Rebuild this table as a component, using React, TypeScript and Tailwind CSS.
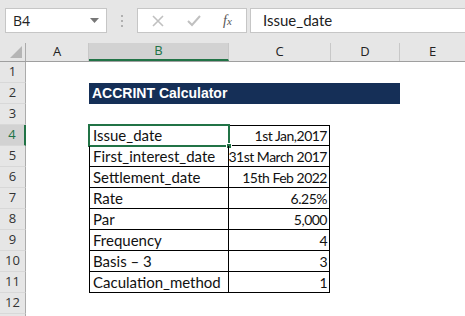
import React from "react";

// workbook sheet with the ACCRINT inputs table

type Row = { label: string; value: string };

const rows: Row[] = [
  { label: "Issue_date", value: "1st Jan,2017" },
  { label: "First_interest_date", value: "31st March 2017" },
  { label: "Settlement_date", value: "15th Feb 2022" },
  { label: "Rate", value: "6.25%" },
  { label: "Par", value: "5,000" },
  { label: "Frequency", value: "4" },
  { label: "Basis – 3", value: "3" },
  { label: "Caculation_method", value: "1" },
];

const columns = [
  { name: "A", width: "w-[63px]" },
  { name: "B", width: "w-[140px]" },
  { name: "C", width: "w-[102px]" },
  { name: "D", width: "w-[69px]" },
  { name: "E", width: "w-[66px]" },
];

const cellFont = { fontFamily: "Lato, 'Liberation Sans', sans-serif" };

const RowHeader = ({ n, active = false }: { n?: number; active?: boolean }) => (
  <div
    className={`w-[26px] shrink-0 h-full flex items-center justify-center text-[13px] border-b border-[#d8d8d8] ${
      active
        ? "bg-[#d2d2d2] border-r-2 border-r-[#217346] text-[#217346]"
        : "bg-[#e6e6e6] border-r border-r-[#ababab] text-[#333]"
    }`}
    style={{ fontFamily: "'Open Sans', sans-serif" }}
  >
    {n}
  </div>
);

const FormulaBar = () => (
  <div className="h-[43px] bg-[#e6e6e6] flex items-start pt-[8px] pl-[5px]">
    <div className="w-[102px] h-[25px] bg-white border border-[#c6c6c6] flex items-center justify-between pl-[7px] pr-[7px]">
      <span className="text-[14px] text-[#222]" style={{ fontFamily: "'Open Sans', sans-serif" }}>
        B4
      </span>
      <svg width="9" height="5" viewBox="0 0 9 5">
        <path d="M0 0h9L4.5 5z" fill="#777" />
      </svg>
    </div>
    <div className="w-[30px] h-[25px] flex flex-col items-center justify-center gap-[3px]">
      <span className="w-[2px] h-[2px] bg-[#b0b0b0]" />
      <span className="w-[2px] h-[2px] bg-[#b0b0b0]" />
      <span className="w-[2px] h-[2px] bg-[#b0b0b0]" />
    </div>
    <div className="w-[110px] h-[25px] bg-white border border-[#c6c6c6] flex items-center pl-[14px]">
      <svg width="12" height="12" viewBox="0 0 12 12">
        <path d="M1 1l10 10M11 1L1 11" stroke="#c0c0c0" strokeWidth="1.6" />
      </svg>
      <svg width="14" height="12" viewBox="0 0 14 12" className="ml-[23px]">
        <path d="M1 6l4 4L13 1" stroke="#c0c0c0" strokeWidth="2" fill="none" />
      </svg>
      <span
        className="ml-[22px] text-[14px] italic text-[#555]"
        style={{ fontFamily: "'Liberation Serif', serif" }}
      >
        f<span className="text-[11px]">x</span>
      </span>
    </div>
    <div className="ml-[3px] flex-1 h-[25px] bg-white border border-[#c6c6c6] border-r-0 flex items-center pl-[12px]">
      <span className="text-[15px] text-[#222]" style={cellFont}>
        Issue_date
      </span>
    </div>
  </div>
);

const ColumnHeaders = () => (
  <div className="h-[19px] flex bg-[#e6e6e6] border-b border-[#9f9f9f]">
    <div className="w-[26px] shrink-0 border-r border-[#ababab] relative">
      <svg width="12" height="12" viewBox="0 0 12 12" className="absolute right-[3px] bottom-[3px]">
        <path d="M12 0v12H0z" fill="#b5b5b5" />
      </svg>
    </div>
    {columns.map((c) => (
      <div
        key={c.name}
        className={`${c.width} shrink-0 flex items-center justify-center text-[13px] border-r border-[#c8c8c8] ${
          c.name === "B" ? "bg-[#d2d2d2] border-b-2 border-b-[#217346] text-[#217346]" : "text-[#222]"
        }`}
        style={{ fontFamily: "'Open Sans', sans-serif" }}
      >
        {c.name}
      </div>
    ))}
  </div>
);

export default function App() {
  return (
    <div className="w-[465px] h-[316px] overflow-hidden bg-white">
      <FormulaBar />
      <ColumnHeaders />

      {/* row 1 */}
      <div className="h-[21px] flex">
        <RowHeader n={1} />
      </div>

      {/* row 2: title band */}
      <div className="h-[21px] flex">
        <RowHeader n={2} />
        <div className="w-[63px] shrink-0" />
        <div className="w-[311px] shrink-0 bg-[#152f57] flex items-center pl-[3px]">
          <span
            className="text-white font-bold text-[14px]"
            style={{ fontFamily: "'Liberation Sans', Arial, sans-serif" }}
          >
            ACCRINT Calculator
          </span>
        </div>
      </div>

      {/* row 3 */}
      <div className="h-[21px] flex">
        <RowHeader n={3} />
      </div>

      {rows.map((r, i) => (
        <div key={r.label} className="h-[21px] flex">
          <RowHeader n={i + 4} active={i === 0} />
          <div className="w-[63px] shrink-0" />
          <div
            className={`w-[140px] shrink-0 relative border-l border-r border-b border-black flex items-center pl-[3px] text-[15px] text-[#111] whitespace-nowrap ${
              i === 0 ? "border-t" : ""
            }`}
            style={cellFont}
          >
            {r.label}
            {i === 0 && (
              <>
                <div className="absolute -left-[2px] -top-[2px] w-[142px] h-[23px] border-2 border-[#217346]" />
                <div className="absolute -right-[4px] -bottom-[4px] w-[6px] h-[6px] bg-[#217346] border border-white" />
              </>
            )}
          </div>
          <div
            className={`w-[101px] shrink-0 border-r border-b border-black flex items-center justify-end pr-[2px] text-[14px] tracking-[-0.5px] text-[#111] whitespace-nowrap ${
              i === 0 ? "border-t" : ""
            }`}
            style={cellFont}
          >
            {r.value}
          </div>
        </div>
      ))}

      <div className="h-[21px] flex">
        <RowHeader n={12} />
      </div>
      <div className="h-[21px] flex">
        <RowHeader />
      </div>
    </div>
  );
}
